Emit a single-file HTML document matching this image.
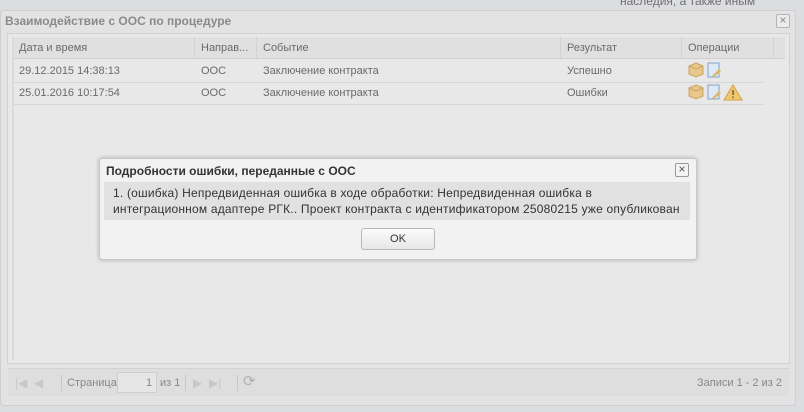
<!DOCTYPE html>
<html><head><meta charset="utf-8"><style>
*{box-sizing:border-box;margin:0;padding:0}
body{width:804px;height:412px;overflow:hidden;background:#dcdde1;font-family:"Liberation Sans",sans-serif;font-size:11px;color:#6a6a6a;position:relative}
.a{position:absolute}
.t{position:absolute;white-space:nowrap}
</style></head><body>
<div class="t" style="left:620px;top:-6px;font-size:12px;color:#707070">наследия, а также иным</div>
<div class="a" style="left:0;top:10px;width:796px;height:396px;background:#e3e3e3;border:1px solid #cfcfcf;border-radius:4px"></div>
<div class="t" style="left:5px;top:14px;font-weight:bold;font-size:12px;color:#8a8a8a">Взаимодействие с ООС по процедуре</div>
<div class="a" style="left:776px;top:14px;width:14px;height:14px;border:1px solid #b5b5b5;background:#ececec;border-radius:2px;color:#888;font-size:12px;line-height:11px;text-align:center">×</div>
<div class="a" style="left:7px;top:33px;width:783px;height:331px;background:#e8e8e8;border:1px solid #d2d2d2"></div>
<div class="a" style="left:12px;top:37px;width:773px;height:22px;background:#e0e0e0;border-bottom:1px solid #d0d0d0"></div>
<div class="a" style="left:12px;top:37px;width:2px;height:323px;background:#dadada"></div>
<div class="a" style="left:194px;top:37px;width:1px;height:22px;background:#d2d2d2"></div>
<div class="a" style="left:256px;top:37px;width:1px;height:22px;background:#d2d2d2"></div>
<div class="a" style="left:560px;top:37px;width:1px;height:22px;background:#d2d2d2"></div>
<div class="a" style="left:681px;top:37px;width:1px;height:22px;background:#d2d2d2"></div>
<div class="a" style="left:773px;top:37px;width:1px;height:22px;background:#d2d2d2"></div>
<div class="t" style="left:19px;top:42px">Дата и время</div>
<div class="t" style="left:201px;top:42px">Направ...</div>
<div class="t" style="left:263px;top:42px">Событие</div>
<div class="t" style="left:567px;top:42px">Результат</div>
<div class="t" style="left:688px;top:42px">Операции</div>
<div class="a" style="left:14px;top:82px;width:750px;height:1px;background:#d6d6d6"></div>
<div class="a" style="left:14px;top:104px;width:750px;height:1px;background:#d6d6d6"></div>
<div class="t" style="left:19px;top:65px">29.12.2015 14:38:13</div>
<div class="t" style="left:201px;top:65px">ООС</div>
<div class="t" style="left:263px;top:65px">Заключение контракта</div>
<div class="t" style="left:567px;top:65px">Успешно</div>
<div class="t" style="left:19px;top:87px">25.01.2016 10:17:54</div>
<div class="t" style="left:201px;top:87px">ООС</div>
<div class="t" style="left:263px;top:87px">Заключение контракта</div>
<div class="t" style="left:567px;top:87px">Ошибки</div>
<svg class="a" style="left:688px;top:61px" width="40" height="18"><polygon points="8,2 15,5 15,13 8,16 1,13 1,5" fill="#e8c88a" stroke="#c9a460"/><polyline points="1,5 8,8 15,5 M8,8 8,16" fill="none" stroke="#c9a460"/><rect x="20" y="2" width="11" height="14" fill="#dfe9f3" stroke="#7fa3c8"/><path d="M24 15 L31 8 L33 10 L26 16Z" fill="#e0b860"/></svg>
<svg class="a" style="left:688px;top:83px" width="70" height="20"><polygon points="8,2 15,5 15,13 8,16 1,13 1,5" fill="#e8c88a" stroke="#c9a460"/><polyline points="1,5 8,8 15,5 M8,8 8,16" fill="none" stroke="#c9a460"/><rect x="20" y="2" width="11" height="14" fill="#dfe9f3" stroke="#7fa3c8"/><path d="M24 15 L31 8 L33 10 L26 16Z" fill="#e0b860"/><polygon points="45,2 54,17 36,17" fill="#f0c870" stroke="#d6a040"/><rect x="44.3" y="7" width="1.6" height="5" fill="#806030"/><rect x="44.3" y="13.5" width="1.6" height="1.6" fill="#806030"/></svg>
<div class="a" style="left:8px;top:368px;width:781px;height:28px;background:#dedede;border-top:1px solid #d2d2d2"></div>
<div class="t" style="left:15px;top:376px;color:#c8c8c8;font-size:12px">|◀ &nbsp;◀</div>
<div class="a" style="left:61px;top:375px;width:1px;height:16px;background:#c8c8c8"></div>
<div class="t" style="left:67px;top:377px;color:#888">Страница</div>
<div class="a" style="left:117px;top:372px;width:40px;height:21px;border:1px solid #cfcfcf;background:#e6e6e6"></div>
<div class="t" style="left:146px;top:377px;color:#888">1</div>
<div class="t" style="left:160px;top:377px;color:#888">из 1</div>
<div class="a" style="left:185px;top:375px;width:1px;height:16px;background:#c8c8c8"></div>
<div class="t" style="left:193px;top:376px;color:#c8c8c8;font-size:12px">▶ &nbsp;▶|</div>
<div class="a" style="left:237px;top:375px;width:1px;height:16px;background:#c8c8c8"></div>
<div class="t" style="left:243px;top:372px;color:#b0b0b0;font-size:15px">⟳</div>
<div class="t" style="left:697px;top:377px;color:#888">Записи 1 - 2 из 2</div>
<div class="a" style="left:99px;top:158px;width:598px;height:102px;background:#f2f2f2;border:1px solid #c8c8c8;border-radius:3px;box-shadow:0 0 4px rgba(0,0,0,.25)"></div>
<div class="t" style="left:106px;top:164px;font-weight:bold;font-size:12px;color:#333">Подробности ошибки, переданные с ООС</div>
<div class="a" style="left:675px;top:163px;width:14px;height:14px;border:1px solid #999;background:#f4f4f4;border-radius:2px;color:#555;font-size:12px;line-height:11px;text-align:center">×</div>
<div class="a" style="left:104px;top:182px;width:586px;height:38px;background:#e1e1e1"></div>
<div class="t" style="left:113px;top:185px;font-size:12px;color:#333;line-height:16px;letter-spacing:0.2px">1. (ошибка) Непредвиденная ошибка в ходе обработки: Непредвиденная ошибка в<br>интеграционном адаптере РГК.. Проект контракта с идентификатором 25080215 уже опубликован</div>
<div class="a" style="left:361px;top:228px;width:74px;height:22px;border:1px solid #b8b8b8;border-radius:3px;background:linear-gradient(#fafafa,#e8e8e8);text-align:center;line-height:20px;font-size:11px;color:#333">OK</div>
</body></html>
